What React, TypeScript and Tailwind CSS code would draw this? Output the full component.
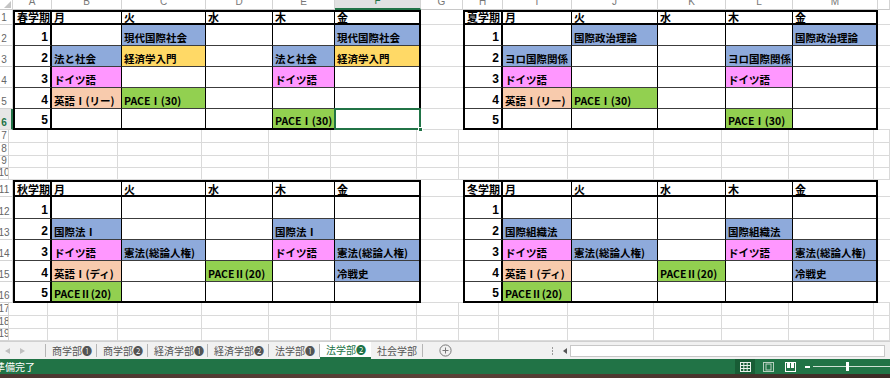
import React from 'react';
import clsx from 'clsx';

type Tone = 'blue' | 'yellow' | 'pink' | 'peach' | 'green';
type Slot = { text: string; tone: Tone } | null;

const toneBg: Record<Tone, string> = {
  blue: 'bg-[#8eaadb]',
  yellow: 'bg-[#ffd966]',
  pink: 'bg-[#ff97ff]',
  peach: 'bg-[#f8cbad]',
  green: 'bg-[#92d050]',
};

const s = (text: string, tone: Tone): Slot => ({ text, tone });

const days = ['月', '火', '水', '木', '金'];

const spring: Slot[][] = [
  [null, s('現代国際社会', 'blue'), null, null, s('現代国際社会', 'blue')],
  [s('法と社会', 'blue'), s('経済学入門', 'yellow'), null, s('法と社会', 'blue'), s('経済学入門', 'yellow')],
  [s('ドイツ語', 'pink'), null, null, s('ドイツ語', 'pink'), null],
  [s('英語Ⅰ(リー)', 'peach'), s('PACEⅠ(30)', 'green'), null, null, null],
  [null, null, null, s('PACEⅠ(30)', 'green'), null],
];

const summer: Slot[][] = [
  [null, s('国際政治理論', 'blue'), null, null, s('国際政治理論', 'blue')],
  [s('ヨロ国際関係', 'blue'), null, null, s('ヨロ国際関係', 'blue'), null],
  [s('ドイツ語', 'pink'), null, null, s('ドイツ語', 'pink'), null],
  [s('英語Ⅰ(リー)', 'peach'), s('PACEⅠ(30)', 'green'), null, null, null],
  [null, null, null, s('PACEⅠ(30)', 'green'), null],
];

const autumn: Slot[][] = [
  [null, null, null, null, null],
  [s('国際法Ⅰ', 'blue'), null, null, s('国際法Ⅰ', 'blue'), null],
  [s('ドイツ語', 'pink'), s('憲法(総論人権)', 'blue'), null, s('ドイツ語', 'pink'), s('憲法(総論人権)', 'blue')],
  [s('英語Ⅰ(ディ)', 'peach'), null, s('PACEⅡ(20)', 'green'), null, s('冷戦史', 'blue')],
  [s('PACEⅡ(20)', 'green'), null, null, null, null],
];

const winter: Slot[][] = [
  [null, null, null, null, null],
  [s('国際組織法', 'blue'), null, null, s('国際組織法', 'blue'), null],
  [s('ドイツ語', 'pink'), s('憲法(総論人権)', 'blue'), null, s('ドイツ語', 'pink'), s('憲法(総論人権)', 'blue')],
  [s('英語Ⅰ(ディ)', 'peach'), null, s('PACEⅡ(20)', 'green'), null, s('冷戦史', 'blue')],
  [s('PACEⅡ(20)', 'green'), null, null, null, null],
];

// sheet columns: row header, A..M, N
const sheetCols = [
  'w-[13px]', 'w-[39px]', 'w-[70px]', 'w-[84px]', 'w-[67px]', 'w-[62px]', 'w-[86px]',
  'w-[42px]', 'w-[40px]', 'w-[69px]', 'w-[86px]', 'w-[68px]', 'w-[67px]', 'w-[85px]', 'flex-1',
];
const letters = ['', 'A', 'B', 'C', 'D', 'E', 'F', 'G', 'H', 'I', 'J', 'K', 'L', 'M', ''];

// inner widths of the bordered tables
const leftCols = ['w-[37px]', 'w-[70px]', 'w-[84px]', 'w-[67px]', 'w-[62px]', 'w-[84px]'];
const rightCols = ['w-[38px]', 'w-[69px]', 'w-[86px]', 'w-[68px]', 'w-[67px]', 'w-[83px]'];
const topRows = ['h-[13px]', 'h-[21px]', 'h-[21px]', 'h-[21px]', 'h-[21px]', 'h-[19px]'];
const lowRows = ['h-[15px]', 'h-[22px]', 'h-[21px]', 'h-[21px]', 'h-[21px]', 'h-[19px]'];

const topBand = ['h-[15px]', 'h-[21px]', 'h-[21px]', 'h-[21px]', 'h-[21px]', 'h-[21px]'];
const lowBand = ['h-[17px]', 'h-[22px]', 'h-[21px]', 'h-[21px]', 'h-[21px]', 'h-[21px]'];

const grid = 'border-[#dadada]';

const RowNum: React.FC<{ n: number; h: string; active?: boolean }> = ({ n, h, active }) => (
  <div
    className={clsx(
      'flex items-end overflow-hidden border-b font-["Liberation_Sans",sans-serif] text-[10px] leading-none',
      h,
      active ? 'border-r-2 border-r-[#217346] border-b-[#dadada] bg-[#e6e6e6] text-[#217346] font-bold' : 'border-r border-[#d4d4d4] text-[#666]'
    )}
  >
    <span className="flex w-[8px] shrink-0 justify-center pb-[1px]">{n}</span>
  </div>
);

const Table: React.FC<{
  label: string;
  slots: Slot[][];
  cols: string[];
  rows: string[];
  selected?: [number, number];
}> = ({ label, slots, cols, rows, selected }) => (
  <div className="shrink-0 border-2 border-black">
    {rows.map((h, r) => (
      <div key={r} className="flex">
        {cols.map((w, c) => {
          let text = '';
          let tone: Tone | null = null;
          if (r === 0) text = c === 0 ? label : days[c - 1];
          else if (c === 0) text = String(r);
          else {
            const slot = slots[r - 1][c - 1];
            if (slot) {
              text = slot.text;
              tone = slot.tone;
            }
          }
          const isSel = selected && selected[0] === r && selected[1] === c;
          return (
            <div
              key={c}
              className={clsx(
                'relative flex shrink-0 items-end whitespace-nowrap text-[10.5px] leading-none font-bold text-black',
                w,
                h,
                c === 0 ? 'border-r-2 border-r-black' : c < 5 ? 'border-r border-r-black' : '',
                r === 0 ? 'border-b-2 border-b-black' : r < 5 ? 'border-b border-b-[#3c3c3c]' : '',
                tone ? toneBg[tone] : 'bg-white',
                r === 0 ? 'pl-[2px] text-[11px]' : c === 0 ? 'justify-end pr-[2px] pb-[2px]' : 'pl-[2px] pb-[2px]'
              )}
            >
              <span className={clsx(r > 0 && c === 0 && 'font-["Liberation_Sans",sans-serif] text-[12px]')}>{text}</span>
              {isSel && (
                <div className="absolute -top-[1px] -left-[1px] -right-[2px] -bottom-[2px] border-2 border-[#217346]">
                  <div className="absolute -right-[4px] -bottom-[4px] h-[5px] w-[5px] border border-white bg-[#217346]" />
                </div>
              )}
            </div>
          );
        })}
      </div>
    ))}
  </div>
);

const FillCol: React.FC<{ w: string; hs: string[] }> = ({ w, hs }) => (
  <div className={clsx('flex flex-col', w, w !== 'flex-1' && 'shrink-0')}>
    {hs.map((h, i) => (
      <div key={i} className={clsx(h, 'border-b', grid)} />
    ))}
  </div>
);

const PlainRow: React.FC<{ n: number; h: string }> = ({ n, h }) => (
  <div className={clsx('flex', h)}>
    {sheetCols.map((w, i) =>
      i === 0 ? (
        <RowNum key={i} n={n} h={h} />
      ) : (
        <div key={i} className={clsx(w, i < 14 && 'shrink-0', 'border-r border-b', grid)} />
      )
    )}
  </div>
);

const Band: React.FC<{
  first: number;
  hs: string[];
  rows: string[];
  left: { label: string; slots: Slot[][] };
  right: { label: string; slots: Slot[][] };
  selected?: [number, number];
  activeRow?: number;
}> = ({ first, hs, rows, left, right, selected, activeRow }) => (
  <div className="flex">
    <div className="flex w-[13px] shrink-0 flex-col">
      {hs.map((h, i) => (
        <RowNum key={i} n={first + i} h={h} active={activeRow === first + i} />
      ))}
    </div>
    <Table label={left.label} slots={left.slots} cols={leftCols} rows={rows} selected={selected} />
    <FillCol w="w-[42px]" hs={hs} />
    <Table label={right.label} slots={right.slots} cols={rightCols} rows={rows} />
    <FillCol w="flex-1" hs={hs} />
  </div>
);

const ColumnHeader = () => (
  <div className="flex h-[10px] font-['Liberation_Sans',sans-serif] text-[10px] leading-none">
    {sheetCols.map((w, i) => (
      <div
        key={i}
        className={clsx(
          w,
          i < 14 && 'shrink-0',
          'relative flex items-end justify-center overflow-hidden border-r border-[#d4d4d4]',
          i === 6 ? 'border-b-2 border-b-[#217346] bg-[#e1e1e1] text-[#217346]' : 'border-b border-b-[#c8c8c8] text-[#777]'
        )}
      >
        {i === 0 ? (
          <svg width="7" height="7" viewBox="0 0 7 7" className="absolute right-[1px] bottom-[1px]">
            <path d="M7 0 L7 7 L0 7 Z" fill="#c4c4c4" />
          </svg>
        ) : (
          <span className="pb-[2px]">{letters[i]}</span>
        )}
      </div>
    ))}
  </div>
);

const tabs = [
  { name: '商学部❶', w: 'w-[51px]' },
  { name: '商学部❷', w: 'w-[51px]' },
  { name: '経済学部❶', w: 'w-[60px]' },
  { name: '経済学部❷', w: 'w-[61px]' },
  { name: '法学部❶', w: 'w-[51px]' },
  { name: '法学部❷', w: 'w-[51px]', active: true },
  { name: '社会学部', w: 'w-[52px]' },
];

const TabBar = () => (
  <div className="flex h-[18px] items-center border-t border-[#d0d0d0] bg-[#f1f1f1] text-[10px] leading-none text-[#555]">
    <div className="flex w-[45px] shrink-0 items-center gap-[10px] pl-[5px]">
      <svg width="5" height="6" viewBox="0 0 5 6"><path d="M5 0 L0 3 L5 6 Z" fill="#c0c0c0" /></svg>
      <svg width="5" height="6" viewBox="0 0 5 6"><path d="M0 0 L5 3 L0 6 Z" fill="#c0c0c0" /></svg>
    </div>
    <div className="h-[13px] w-px shrink-0 bg-[#b5b5b5]" />
    {tabs.map((t) => (
      <div key={t.name} className={clsx('flex h-full shrink-0 items-center', t.w, t.active ? 'bg-white' : '')}>
        <span
          className={clsx(
            'flex h-full flex-1 items-center pl-[6px] whitespace-nowrap',
            t.active && 'border-b-2 border-[#217346] text-[#217346]'
          )}
        >
          {t.name}
        </span>
        {!t.active && <div className="h-[13px] w-px shrink-0 bg-[#b5b5b5]" />}
      </div>
    ))}
    <div className="ml-[16px] shrink-0">
      <svg width="13" height="13" viewBox="0 0 13 13">
        <circle cx="6.5" cy="6.5" r="5.6" fill="none" stroke="#777" strokeWidth="1" />
        <path d="M6.5 3.5 V9.5 M3.5 6.5 H9.5" stroke="#777" strokeWidth="1" />
      </svg>
    </div>
    <div className="ml-[97px] flex w-[6px] shrink-0 flex-col items-center gap-[1px]">
      <span className="h-[2px] w-[1px] bg-[#999]" />
      <span className="h-[2px] w-[1px] bg-[#999]" />
      <span className="h-[2px] w-[1px] bg-[#999]" />
    </div>
    <div className="ml-[8px] shrink-0">
      <svg width="4" height="6" viewBox="0 0 4 6"><path d="M4 0 L0 3 L4 6 Z" fill="#555" /></svg>
    </div>
    <div className="ml-[3px] mr-[5px] h-[12px] flex-1 border border-[#c8c8c8] bg-white" />
  </div>
);

const StatusBar = () => (
  <div className="flex h-[15px] items-center bg-[#217346] text-[10px] leading-none text-white">
    <span className="-ml-[5px] whitespace-nowrap">準備完了</span>
    <div className="ml-auto flex h-full items-center">
      <div className="flex h-full w-[20px] items-center justify-center bg-[#185c35]">
        <svg width="11" height="10" viewBox="0 0 11 10">
          <rect x="0.5" y="0.5" width="10" height="9" fill="none" stroke="#e8f0ea" />
          <path d="M3.8 0.5 V9.5 M7.2 0.5 V9.5 M0.5 3.5 H10.5 M0.5 6.5 H10.5" stroke="#e8f0ea" />
        </svg>
      </div>
      <div className="ml-[8px] flex items-center">
        <svg width="11" height="10" viewBox="0 0 11 10">
          <rect x="0.5" y="0.5" width="10" height="9" fill="none" stroke="#b8d0bf" />
          <rect x="3" y="2" width="5" height="6" fill="none" stroke="#b8d0bf" />
        </svg>
      </div>
      <div className="ml-[11px] flex items-center">
        <svg width="11" height="10" viewBox="0 0 11 10">
          <rect x="0.5" y="0.5" width="10" height="9" fill="none" stroke="#ffffff" />
          <rect x="2" y="1" width="3" height="5" fill="#ffffff" />
          <rect x="6" y="1" width="3" height="5" fill="#ffffff" />
        </svg>
      </div>
      <div className="ml-[9px] h-[2px] w-[5px] bg-white" />
      <div className="ml-[3px] flex w-[77px] items-center">
        <div className="h-px w-[33px] bg-[#cfe0d4]" />
        <div className="h-[9px] w-[3px] bg-white" />
        <div className="h-px flex-1 bg-[#cfe0d4]" />
      </div>
    </div>
  </div>
);

export default function App() {
  return (
    <div className="h-[378px] w-[890px] overflow-hidden bg-white font-['Noto_Sans_CJK_JP',sans-serif]">
      <ColumnHeader />
      <Band
        first={1}
        hs={topBand}
        rows={topRows}
        left={{ label: '春学期', slots: spring }}
        right={{ label: '夏学期', slots: summer }}
        selected={[5, 5]}
        activeRow={6}
      />
      <PlainRow n={7} h="h-[13px]" />
      <PlainRow n={8} h="h-[13px]" />
      <PlainRow n={9} h="h-[12px]" />
      <PlainRow n={10} h="h-[12px]" />
      <Band
        first={11}
        hs={lowBand}
        rows={lowRows}
        left={{ label: '秋学期', slots: autumn }}
        right={{ label: '冬学期', slots: winter }}
      />
      <PlainRow n={17} h="h-[13px]" />
      <PlainRow n={18} h="h-[13px]" />
      <PlainRow n={19} h="h-[12px]" />
      <TabBar />
      <StatusBar />
      <div className="h-[4px] bg-gradient-to-r from-[#4a3630] via-[#5a4238] to-[#3b2a25]" />
    </div>
  );
}
